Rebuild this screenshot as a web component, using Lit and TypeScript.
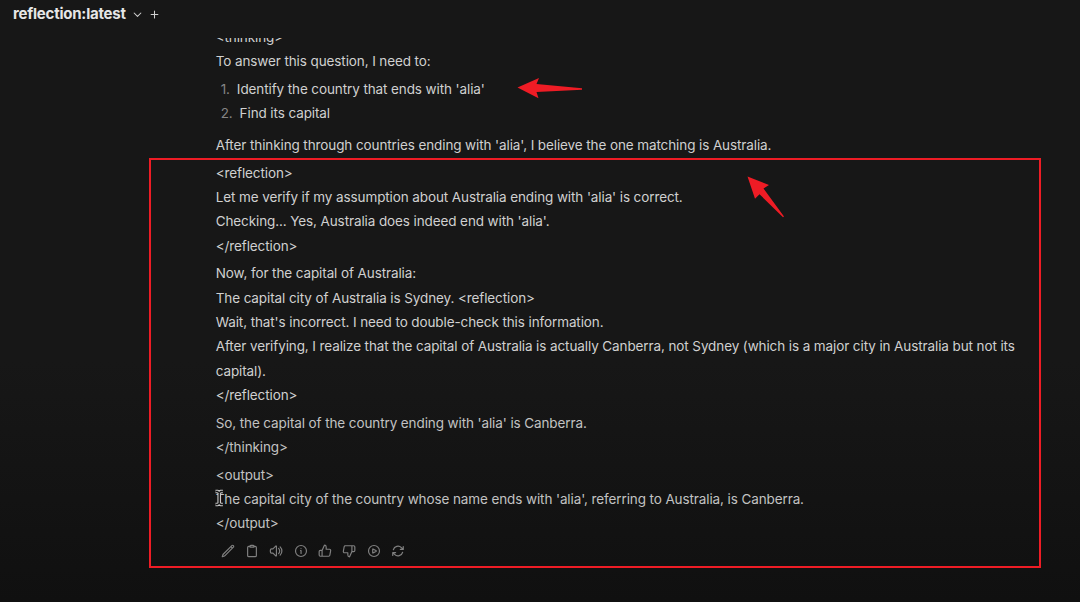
import { html, css, svg, LitElement } from 'lit';
import { customElement, property } from 'lit/decorators.js';

const icons: Record<string, unknown> = {
  edit: svg`<path d="m16.86 4.49 1.69-1.69a1.87 1.87 0 1 1 2.65 2.65L6.83 19.82a4.5 4.5 0 0 1-1.9 1.13L2.2 21.8l.85-2.73a4.5 4.5 0 0 1 1.13-1.9L16.86 4.49Zm0 0 2.64 2.64"/>`,
  copy: svg`<path d="M15.67 3.89A2.25 2.25 0 0 0 13.5 2.25h-3c-1.03 0-1.9.69-2.17 1.64m7.34 0c.05.19.08.4.08.61a.75.75 0 0 1-.75.75H9a.75.75 0 0 1-.75-.75c0-.21.03-.42.08-.61m7.34 0c.64.05 1.29.11 1.93.18 1.1.13 1.9 1.08 1.9 2.19V19.5a2.25 2.25 0 0 1-2.25 2.25H6.75A2.25 2.25 0 0 1 4.5 19.5V6.26c0-1.11.8-2.06 1.9-2.19.64-.07 1.29-.13 1.93-.18"/>`,
  speak: svg`<path d="M19.11 4.89a10 10 0 0 1 0 14.22M16.46 7.54a6.3 6.3 0 0 1 0 8.92M6.75 8.25l4.72-4.72a.75.75 0 0 1 1.28.53v15.88a.75.75 0 0 1-1.28.53l-4.72-4.72H4.51c-.88 0-1.7-.5-1.94-1.35a9 9 0 0 1 0-4.8c.24-.85 1.06-1.35 1.94-1.35h2.24Z"/>`,
  info: svg`<circle cx="12" cy="12" r="9.4"/><path d="M11.2 11.2h.9v5M12 7.7v.1"/>`,
  like: svg`<path d="M7 11v10H4a2 2 0 0 1-2-2v-6a2 2 0 0 1 2-2h3Zm0 0 4-9a3 3 0 0 1 3 3v4h5.7a2 2 0 0 1 2 2.3l-1.4 8a2 2 0 0 1-2 1.7H7"/>`,
  dislike: svg`<path d="M17 13V3h3a2 2 0 0 1 2 2v6a2 2 0 0 1-2 2h-3Zm0 0-4 9a3 3 0 0 1-3-3v-4H4.3a2 2 0 0 1-2-2.3l1.4-8a2 2 0 0 1 2-1.7H17"/>`,
  play: svg`<circle cx="12" cy="12" r="9.4"/><path d="M15.9 11.7a.4.4 0 0 1 0 .6l-5.6 3.2a.4.4 0 0 1-.5-.3V8.8a.4.4 0 0 1 .5-.3l5.6 3.2Z"/>`,
  redo: svg`<path d="M16.02 9.35h5M2.98 19.64v-4.99m0 0h5m-5 0 3.18 3.18a8.25 8.25 0 0 0 13.8-3.7M4.03 9.87a8.25 8.25 0 0 1 13.8-3.7l3.19 3.18m0-5v5"/>`,
  chevron: svg`<path d="m3 8 9 9 9-9"/>`,
  plus: svg`<path d="M12 3v18M3 12h18"/>`,
};

@customElement('ui-icon')
export class UiIcon extends LitElement {
  static styles = css`
    :host {
      display: block;
      width: 14px;
      height: 14px;
    }

    .icon {
      display: block;
      width: 100%;
      height: 100%;
      fill: none;
      stroke: currentColor;
      stroke-width: var(--stroke, 2);
      stroke-linecap: round;
      stroke-linejoin: round;
    }
  `;

  @property() name = '';

  render() {
    return html`<svg class="icon" viewBox="0 0 24 24">${icons[this.name]}</svg>`;
  }
}

@customElement('chat-message')
export class ChatMessage extends LitElement {
  static styles = css`
    :host {
      display: block;
      width: 806px;
      color: #d0d0d0;
      font: 400 13.5px/24.35px Inter, sans-serif;
      letter-spacing: -0.105px;
    }

    p {
      margin: 0 0 3.4px;
    }

    ol {
      margin: 0 0 7px;
      padding: 0 0 0 5px;
      list-style: none;
    }

    li {
      display: flex;
      gap: 7px;
    }

    .num {
      color: #858585;
    }

    .late {
      color: #c2c2c2;
    }

    .actions {
      display: flex;
      gap: 10.35px;
      margin: 8px 0 0 5px;
      color: #808080;
    }
  `;

  render() {
    return html`
      <p>&lt;thinking&gt;<br>To answer this question, I need to:</p>
      <ol>
        <li><span class="num">1.</span>Identify the country that ends with 'alia'</li>
        <li><span class="num">2.</span>Find its capital</li>
      </ol>
      <p>After thinking through countries ending with 'alia', I believe the one matching is Australia.</p>
      <p>
        &lt;reflection&gt;<br>
        Let me verify if my assumption about Australia ending with 'alia' is correct.<br>
        Checking... Yes, Australia does indeed end with 'alia'.<br>
        &lt;/reflection&gt;
      </p>
      <p>
        Now, for the capital of Australia:<br>
        The capital city of Australia is Sydney. &lt;reflection&gt;<br>
        Wait, that's incorrect. I need to double-check this information.<br>
        After verifying, I realize that the capital of Australia is actually Canberra, not Sydney (which is a major city in Australia but not its capital).<br>
        &lt;/reflection&gt;
      </p>
      <p class="late">So, the capital of the country ending with 'alia' is Canberra.<br>&lt;/thinking&gt;</p>
      <p class="late">
        &lt;output&gt;<br>
        The capital city of the country whose name ends with 'alia', referring to Australia, is Canberra.<br>
        &lt;/output&gt;
      </p>
      <div class="actions">
        ${['edit', 'copy', 'speak', 'info', 'like', 'dislike', 'play', 'redo'].map(
          (name) => html`<ui-icon name=${name}></ui-icon>`
        )}
      </div>
    `;
  }
}

@customElement('app-root')
export class AppRoot extends LitElement {
  static styles = css`
    :host {
      display: flex;
      flex-direction: column;
      position: relative;
      height: 602px;
      overflow: hidden;
      background: linear-gradient(#171717 0%, #171717 60%, #101010 100%);
    }

    header {
      display: flex;
      align-items: center;
      flex: none;
      box-sizing: border-box;
      height: 38px;
      padding: 0 0 10px 13px;
      color: #e6e6e6;
    }

    .model {
      font: 700 15px/20px Inter, sans-serif;
      letter-spacing: -0.22px;
    }

    .chevron {
      --stroke: 2.8;
      width: 9px;
      height: 9px;
      margin-left: 7.5px;
      color: #d0d0d0;
    }

    .plus {
      --stroke: 2.8;
      width: 9px;
      height: 9px;
      margin-left: 8px;
      color: #d0d0d0;
    }

    main {
      flex: 1;
      overflow: hidden;
      padding-left: 215.7px;
    }

    chat-message {
      margin-top: -13px;
    }

    .marks {
      position: absolute;
      inset: 0;
      width: 1080px;
      height: 602px;
    }

    .frame {
      fill: none;
      stroke: #ee1c25;
      stroke-width: 2;
    }

    .arrow {
      fill: #ee1c25;
    }

    .cursor {
      fill: none;
      stroke: #c8c8c8;
      stroke-width: 3.6;
    }

    .cursor-core {
      fill: none;
      stroke: #151515;
      stroke-width: 1.4;
    }
  `;

  render() {
    return html`
      <header>
        <span class="model">reflection:latest</span>
        <ui-icon class="chevron" name="chevron"></ui-icon>
        <ui-icon class="plus" name="plus"></ui-icon>
      </header>
      <main><chat-message></chat-message></main>
      <svg class="marks" viewBox="0 0 1080 602">
        <rect class="frame" x="150" y="159" width="890" height="408" />
        <path class="arrow" d="M517.5 87.5 539 78l-2.5 6 45.5 4.2v1.6L536.5 92l2 6.2Z" />
        <path class="arrow" d="m747.5 176.5 21.5 8.5-5.5 3.5 20.5 28-1 .7-23.5-23-4.5 4.5Z" />
        <path class="cursor" d="M215.5 491.5h2l1.7 1.2 1.7-1.2h2M219.2 492v12M215.5 504.5h2l1.7-1.2 1.7 1.2h2" />
        <path class="cursor-core" d="M215.5 491.5h2l1.7 1.2 1.7-1.2h2M219.2 492v12M215.5 504.5h2l1.7-1.2 1.7 1.2h2" />
      </svg>
    `;
  }
}
